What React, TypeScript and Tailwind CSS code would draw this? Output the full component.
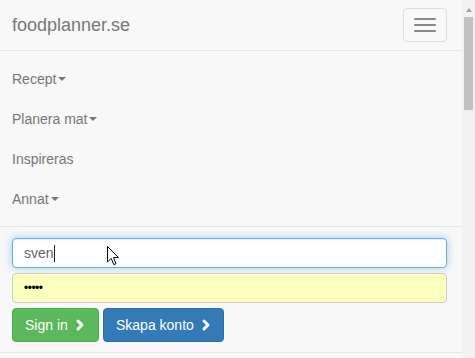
import React from "react";
import { ChevronRight } from "lucide-react";

const font = "font-['Liberation_Sans',Arial,sans-serif]";

function Caret() {
  return (
    <span className="inline-block ml-[2px] w-0 h-0 align-middle border-t-[4px] border-t-[#777] border-x-[4px] border-x-transparent" />
  );
}

function NavItem({ label, dropdown }: { label: string; dropdown?: boolean }) {
  return (
    <li className="h-[40px] flex items-center pl-[12px] text-[14px] leading-[20px] text-[#777]">
      <span>{label}</span>
      {dropdown && <Caret />}
    </li>
  );
}

export default function App() {
  return (
    <div className={`relative w-[475px] h-[358px] overflow-hidden flex bg-[#f8f8f8] ${font}`}>
      {/* Page */}
      <div className="w-[462px] h-full flex flex-col bg-[#f8f8f8]">
        {/* Navbar header */}
        <header className="h-[51px] shrink-0 flex items-center justify-between pl-[12px] pr-[15px] border-b border-[#e7e7e7]">
          <span className="text-[18px] leading-[20px] text-[#777]">foodplanner.se</span>
          <button className="w-[44px] h-[34px] mt-[-1px] border border-[#ddd] rounded-[4px] flex flex-col items-center justify-center gap-[4px]">
            <span className="block w-[22px] h-[2px] rounded-[1px] bg-[#888]" />
            <span className="block w-[22px] h-[2px] rounded-[1px] bg-[#888]" />
            <span className="block w-[22px] h-[2px] rounded-[1px] bg-[#888]" />
          </button>
        </header>

        {/* Nav links */}
        <ul className="py-[7.5px]">
          <NavItem label="Recept" dropdown />
          <NavItem label="Planera mat" dropdown />
          <NavItem label="Inspireras" />
          <NavItem label="Annat" dropdown />
        </ul>

        {/* Login form */}
        <form className="border-y border-[#e7e7e7] pt-[11px] pb-[10px] pl-[12px] pr-[15px] flex flex-col gap-[5px]">
          <div className="h-[30px] flex items-center px-[11px] bg-white border border-[#66afe9] rounded-[4px] shadow-[inset_0_1px_1px_rgba(0,0,0,0.075),0_0_8px_rgba(102,175,233,0.6)] text-[14px] text-[#666]">
            <span>sven</span>
            <span className="inline-block w-[1px] h-[17px] bg-[#222]" />
          </div>
          <div className="h-[30px] flex items-center px-[11px] bg-[#faffbd] border border-[#ccc] rounded-[4px] text-[12px] leading-none text-black tracking-[-0.5px]">
            •••••
          </div>
          <div className="flex gap-[4px]">
            <button type="button" className="h-[34px] w-[87px] flex items-center pl-[12px] gap-[4px] bg-[#5cb85c] border border-[#4cae4c] rounded-[4px] text-white text-[14px]">
              Sign in
              <ChevronRight size={16} strokeWidth={4.5} />
            </button>
            <button type="button" className="h-[34px] w-[121px] flex items-center pl-[12px] gap-[4px] bg-[#337ab7] border border-[#2e6da4] rounded-[4px] text-white text-[14px]">
              Skapa konto
              <ChevronRight size={16} strokeWidth={4.5} />
            </button>
          </div>
        </form>
      </div>

      {/* Scrollbar */}
      <div className="w-[13px] h-full bg-[#f1f1f1] flex flex-col items-center">
        <span className="mt-[8px] w-0 h-0 border-b-[4px] border-b-[#a3a3a3] border-x-[3.5px] border-x-transparent" />
        <div className="mt-[5px] w-[9px] h-[93px] bg-[#c1c1c1]" />
      </div>

      {/* Mouse pointer */}
      <svg className="absolute left-[107px] top-[246px]" width="13" height="20" viewBox="0 0 13 20">
        <path d="M0.5 0.5 L0.5 16 L4.2 12.4 L6.8 18.6 L9 17.7 L6.5 11.6 L11.5 11.6 Z" fill="white" stroke="black" strokeWidth="1" strokeLinejoin="round" />
      </svg>
    </div>
  );
}
